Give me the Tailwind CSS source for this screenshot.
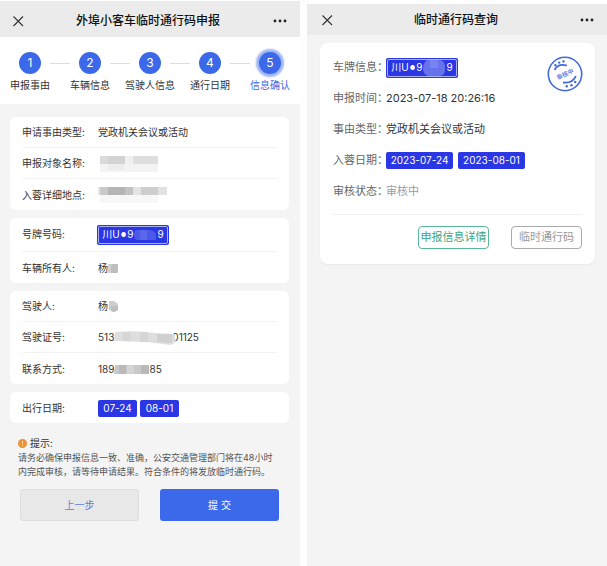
<!DOCTYPE html>
<html lang="zh-CN">
<head>
    <meta charset="UTF-8">
    <meta name="viewport" content="width=device-width, initial-scale=1.0">
    <title>外埠小客车临时通行码</title>
    <script src="https://cdn.jsdelivr.net/npm/@tailwindcss/browser@4"></script>
</head>
<body class="bg-[#fefefe] text-[#333] font-['Inter','Noto_Sans_CJK_SC',sans-serif]">

<div class="grid grid-cols-2 gap-[7px] min-h-screen">

    <!-- 申报 -->
    <section class="flex flex-col pt-px">
        <header class="flex items-center justify-between h-9 px-3 pt-1 bg-[#ebebeb]">
            <button type="button" aria-label="关闭">
                <svg class="w-3 h-3" viewBox="0 0 12 12" fill="none" stroke="#333" stroke-width="1.1"><path d="M1.5 1.5l9.5 9.5M11 1.5L1.5 11"/></svg>
            </button>
            <h1 class="text-xs font-medium text-[#111]">外埠小客车临时通行码申报</h1>
            <button type="button" aria-label="更多">
                <svg class="w-4 h-3" viewBox="0 0 16 12" fill="#222"><circle cx="3" cy="6" r="1.4"/><circle cx="8" cy="6" r="1.4"/><circle cx="13" cy="6" r="1.4"/></svg>
            </button>
        </header>

        <ol class="grid grid-cols-5 h-[67px] pt-[15px] bg-white text-[10px] text-center">
            <li>
                <div class="flex items-center justify-between">
                    <span class="w-[10px]"></span>
                    <span class="size-[22px] rounded-full bg-[#3c69ea] text-white text-xs leading-[22px]">1</span>
                    <span class="w-[10px] h-px bg-[#ddd]"></span>
                </div>
                <p class="mt-[3px] leading-4">申报事由</p>
            </li>
            <li>
                <div class="flex items-center justify-between">
                    <span class="w-[10px] h-px bg-[#ddd]"></span>
                    <span class="size-[22px] rounded-full bg-[#3c69ea] text-white text-xs leading-[22px]">2</span>
                    <span class="w-[10px] h-px bg-[#ddd]"></span>
                </div>
                <p class="mt-[3px] leading-4">车辆信息</p>
            </li>
            <li>
                <div class="flex items-center justify-between">
                    <span class="w-[10px] h-px bg-[#ddd]"></span>
                    <span class="size-[22px] rounded-full bg-[#3c69ea] text-white text-xs leading-[22px]">3</span>
                    <span class="w-[10px] h-px bg-[#ddd]"></span>
                </div>
                <p class="mt-[3px] leading-4">驾驶人信息</p>
            </li>
            <li>
                <div class="flex items-center justify-between">
                    <span class="w-[10px] h-px bg-[#ddd]"></span>
                    <span class="size-[22px] rounded-full bg-[#3c69ea] text-white text-xs leading-[22px]">4</span>
                    <span class="w-[10px] h-px bg-[#ddd]"></span>
                </div>
                <p class="mt-[3px] leading-4">通行日期</p>
            </li>
            <li class="text-[#3c69ea]" aria-current="step">
                <div class="flex items-center justify-between">
                    <span class="w-[10px] h-px bg-[#ddd]"></span>
                    <span class="size-[22px] rounded-full bg-[#3c69ea] text-white text-xs leading-[22px] shadow-[0_0_2px_3px_#9db4f5]">5</span>
                    <span class="w-[10px]"></span>
                </div>
                <p class="mt-[3px] leading-4">信息确认</p>
            </li>
        </ol>

        <main class="grow bg-[#f4f4f4] pl-[10px] pr-[11px] pt-[13px] text-[10px]">
            <div class="flex flex-col gap-2">
                <dl class="bg-white rounded-md px-3 divide-y divide-[#f3f3f3]">
                    <div class="flex items-center h-[31px] pt-px">
                        <dt class="w-[76px] shrink-0">申请事由类型:</dt>
                        <dd>党政机关会议或活动</dd>
                    </div>
                    <div class="flex items-center h-[31px] pt-px">
                        <dt class="w-[76px] shrink-0">申报对象名称:</dt>
                        <dd>
                            <svg class="w-[62px] h-4" viewBox="0 0 62 16"><path d="M2 0h25v8H2z" fill="#d3d3d3"/><path d="M2 0h8v8H2z" fill="#dadada"/><path d="M27 0h8v8h-8z" fill="#f0f0f0"/><path d="M35 0h25v8H35z" fill="#dedede"/><path d="M2 8h58v8H2z" fill="#f3f3f3"/><path d="M10 8h17v6H10z" fill="#ededed"/></svg>
                        </dd>
                    </div>
                    <div class="flex items-center h-[31px] pt-px">
                        <dt class="w-[76px] shrink-0">入蓉详细地点:</dt>
                        <dd>
                            <svg class="w-[70px] h-4" viewBox="0 0 70 16"><path d="M0 0h2v8H0z" fill="#e5e5e5"/><path d="M2 0h8v8H2z" fill="#c9c9c9"/><path d="M10 0h17v8H10z" fill="#b5b5b5"/><path d="M27 0h8v8h-8z" fill="#c3c3c3"/><path d="M35 0h8v8h-8z" fill="#e3e3e3"/><path d="M43 0h17v8H43z" fill="#cecece"/><path d="M60 0h9v8h-9z" fill="#e2e2e2"/><path d="M2 8h58v8H2z" fill="#f7f7f7"/></svg>
                        </dd>
                    </div>
                </dl>

                <dl class="bg-white rounded-md px-3 divide-y divide-[#f3f3f3]">
                    <div class="flex items-center h-[34px]">
                        <dt class="w-[75px] shrink-0">号牌号码:</dt>
                        <dd class="flex items-center h-5 w-[72px] p-px rounded-xs bg-[#2b36e4]">
                            <span class="flex items-center justify-center gap-px w-full h-full rounded-xs border border-[#a9b2f8] text-[10px] text-white">川U<span class="text-[6px]">●</span>9<svg class="w-[22px] h-[10px]" viewBox="0 0 22 10"><path d="M2 0h13q7 0 7 6v4H3Q0 9 0 5q0-4 2-5z" fill="#4c59e8"/><path d="M6 0h7v10H6z" fill="#5b68ec"/></svg>9</span>
                        </dd>
                    </div>
                    <div class="flex items-center h-[31px] pt-px">
                        <dt class="w-[76px] shrink-0">车辆所有人:</dt>
                        <dd class="flex items-center">杨<svg class="w-[10px] h-[9px]" viewBox="0 0 10 9"><rect width="10" height="9" rx="1" fill="#bdbdbd"/><path d="M0 0h3v9H0z" fill="#d2d2d2"/></svg></dd>
                    </div>
                </dl>

                <dl class="bg-white rounded-md px-3 divide-y divide-[#f3f3f3]">
                    <div class="flex items-center h-[31px] pt-px">
                        <dt class="w-[76px] shrink-0">驾驶人:</dt>
                        <dd class="flex items-center">杨<svg class="w-[10px] h-[11px]" viewBox="0 0 10 11"><path d="M1 0h5l4 3v6l-4 2-5-2z" fill="#cecece"/><path d="M3 5h7v4l-4 2-3-1z" fill="#bfbfbf"/></svg></dd>
                    </div>
                    <div class="flex items-center h-[31px] pt-px">
                        <dt class="w-[76px] shrink-0">驾驶证号:</dt>
                        <dd class="flex items-center">513<svg class="relative w-[62px] h-[14px] -mr-1" viewBox="0 0 62 14"><path d="M1 1Q22-1 40 2l20 1 2 8-5 3-24-3-33-1z" fill="#dedede"/><path d="M9 1h8v9H9zM26 1h8v10h-8z" fill="#d6d6d6"/><path d="M43 3h15v9l-15-1z" fill="#d0d0d0"/></svg>01125</dd>
                    </div>
                    <div class="flex items-center h-[31px] pt-px">
                        <dt class="w-[76px] shrink-0">联系方式:</dt>
                        <dd class="flex items-center">189<svg class="w-[35px] h-[9px]" viewBox="0 0 35 9"><path d="M1 0h34v9H0z" fill="#c8c8c8"/><path d="M5 0h7v9H5zM27 0h8v9h-8z" fill="#b9b9b9"/><path d="M13 0h7v9h-7z" fill="#d4d4d4"/></svg>85</dd>
                    </div>
                </dl>

                <dl class="bg-white rounded-md px-3">
                    <div class="flex items-center h-[31px] pt-px">
                        <dt class="w-[76px] shrink-0">出行日期:</dt>
                        <dd class="flex gap-[3px] text-white">
                            <span class="w-[39px] h-[17px] leading-[17px] rounded-xs bg-[#2b36e4] text-center">07-24</span>
                            <span class="w-[39px] h-[17px] leading-[17px] rounded-xs bg-[#2b36e4] text-center">08-01</span>
                        </dd>
                    </div>
                </dl>
            </div>

            <!-- 提示 -->
            <div class="mt-3 px-2">
                <p class="flex items-center gap-[3px] leading-4">
                    <svg class="w-[9px] h-[9px]" viewBox="0 0 9 9"><circle cx="4.5" cy="4.5" r="4.5" fill="#e8943a"/><path d="M4.5 2v3M4.5 6v1" stroke="#fbe0bd" stroke-width="1"/></svg>
                    提示:
                </p>
                <p class="text-[9px] leading-[14px] text-[#555]">请务必确保申报信息一致、准确，公安交通管理部门将在48小时内完成审核，请等待申请结果。符合条件的将发放临时通行码。</p>
            </div>

            <div class="grid grid-cols-2 gap-[21px] mt-[10px] px-[10px]">
                <button type="button" class="h-8 rounded-[3px] border border-[#dedede] bg-[#e8e8e8] text-[#5a7be6]">上一步</button>
                <button type="submit" class="h-8 rounded-[3px] bg-[#3c69ea] text-white">提 交</button>
            </div>
        </main>
    </section>

    <!-- 查询 -->
    <section class="flex flex-col pt-1">
        <header class="flex items-center justify-between h-[31px] px-3 pl-[14px] bg-[#ebebeb]">
            <button type="button" aria-label="关闭">
                <svg class="w-3 h-3" viewBox="0 0 12 12" fill="none" stroke="#333" stroke-width="1.1"><path d="M1.5 1.5l9.5 9.5M11 1.5L1.5 11"/></svg>
            </button>
            <h1 class="text-xs font-medium text-[#111]">临时通行码查询</h1>
            <button type="button" aria-label="更多">
                <svg class="w-4 h-3" viewBox="0 0 16 12" fill="#222"><circle cx="3" cy="6" r="1.4"/><circle cx="8" cy="6" r="1.4"/><circle cx="13" cy="6" r="1.4"/></svg>
            </button>
        </header>

        <main class="grow bg-[#f4f4f4] pl-[13px] pr-3 pt-2 text-[11px]">
            <article class="relative bg-white rounded-lg shadow-xs px-[13px] pt-[9px] pb-[15px]">
                <dl class="pb-[7px] border-b border-[#f0f0f0]">
                    <div class="flex items-center h-[31px]">
                        <dt class="w-[53px] shrink-0 whitespace-nowrap text-[#666]">车牌信息：</dt>
                        <dd class="flex items-center h-5 w-[72px] p-px rounded-xs bg-[#2b36e4]">
                            <span class="flex items-center justify-center gap-px w-full h-full rounded-xs border border-[#a9b2f8] text-[10px] text-white">川U<span class="text-[6px]">●</span>9<svg class="w-[22px] h-4" viewBox="0 0 22 16"><path d="M4 0h14q4 2 4 6v5q-1 5-6 5H5q-5-2-5-7 0-6 4-9z" fill="#6572ec"/><path d="M7 0h8v8H7z" fill="#7783f0"/></svg>9</span>
                        </dd>
                    </div>
                    <div class="flex items-center h-[31px]">
                        <dt class="w-[53px] shrink-0 whitespace-nowrap text-[#666]">申报时间：</dt>
                        <dd>2023-07-18 20:26:16</dd>
                    </div>
                    <div class="flex items-center h-[31px]">
                        <dt class="w-[53px] shrink-0 whitespace-nowrap text-[#666]">事由类型：</dt>
                        <dd>党政机关会议或活动</dd>
                    </div>
                    <div class="flex items-center h-[31px]">
                        <dt class="w-[53px] shrink-0 whitespace-nowrap text-[#666]">入蓉日期：</dt>
                        <dd class="flex gap-[5px] text-[10px] text-white">
                            <span class="w-[67px] h-[17px] leading-[17px] rounded-xs bg-[#2b36e4] text-center">2023-07-24</span>
                            <span class="w-[67px] h-[17px] leading-[17px] rounded-xs bg-[#2b36e4] text-center">2023-08-01</span>
                        </dd>
                    </div>
                    <div class="flex items-center h-[31px]">
                        <dt class="w-[53px] shrink-0 whitespace-nowrap text-[#666]">审核状态：</dt>
                        <dd class="text-[#9a9aa2]">审核中</dd>
                    </div>
                </dl>

                <div class="flex justify-end gap-[22px] mt-[11px]">
                    <button type="button" class="w-[71px] h-[23px] rounded-sm border border-[#58b69c] text-[#3aa587]">申报信息详情</button>
                    <button type="button" class="w-[71px] h-[23px] rounded-sm border border-[#aaa] text-[#999]">临时通行码</button>
                </div>

                <!-- 审核中印章 -->
                <svg class="absolute top-[13px] right-3 w-9 h-9" viewBox="0 0 36 36" fill="none" stroke="#4169e1">
                    <circle cx="18" cy="18" r="16.7" stroke-width="1.6"/>
                    <path d="M7.5 14Q11 7 20 9.500M16 26.500Q26 27.500 28.800 20" stroke-width="1.8"/>
                    <g fill="#4169e1" stroke="none">
                        <circle cx="8.400" cy="9.200" r="1.200"/><circle cx="12.200" cy="6.600" r="1.200"/><circle cx="16.500" cy="5.400" r="1.200"/>
                        <circle cx="19.700" cy="30.300" r="1.200"/><circle cx="24.500" cy="29.200" r="1.200"/><circle cx="28.200" cy="26" r="1.200"/>
                        <text x="18" y="20.500" font-size="6" font-weight="500" text-anchor="middle" transform="rotate(-25 18 18)">审核中</text>
                    </g>
                </svg>
            </article>
        </main>
    </section>

</div>

</body>
</html>
